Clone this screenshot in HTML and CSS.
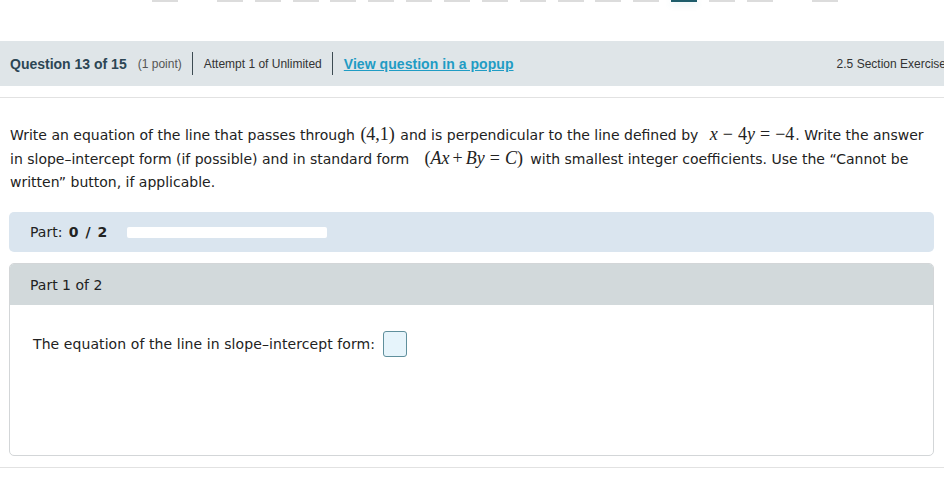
FILE: index.html
```html
<!DOCTYPE html>
<html lang="en">
<head>
  <meta charset="UTF-8" />
  <title>Question 13 of 15</title>
  <link rel="stylesheet" href="styles.css">
</head>
<body>

  <nav class="qnav">
    <span class="qnav-btn qnav-arrow"></span>
    <span class="qnav-btn"></span>
    <span class="qnav-btn"></span>
    <span class="qnav-btn"></span>
    <span class="qnav-btn"></span>
    <span class="qnav-btn"></span>
    <span class="qnav-btn"></span>
    <span class="qnav-btn"></span>
    <span class="qnav-btn"></span>
    <span class="qnav-btn"></span>
    <span class="qnav-btn"></span>
    <span class="qnav-btn"></span>
    <span class="qnav-btn"></span>
    <span class="qnav-btn active"></span>
    <span class="qnav-btn"></span>
    <span class="qnav-btn"></span>
    <span class="qnav-btn qnav-arrow"></span>
  </nav>

  <header class="qheader">
    <div class="qheader-left">
      <strong class="qnum">Question 13 of 15</strong>
      <span class="points">(1 point)</span>
      <span class="divider"></span>
      <span class="attempt">Attempt 1 of Unlimited</span>
      <span class="divider"></span>
      <a class="popup-link" href="#">View question in a popup</a>
    </div>
    <div class="section-name">2.5 Section Exercise</div>
  </header>
  <div class="header-rule"></div>

  <main class="question">
    <p class="prompt">
      Write an equation of the line that passes through <span class="math big">(4,1)</span> and is perpendicular to the line defined by
      <span class="math eq"><i>x</i><span class="op">&minus;</span>4<i>y</i><span class="op">=</span>&minus;4</span>. Write the answer
      in slope&ndash;intercept form (if possible) and in standard form
      <span class="math std">(<i>Ax</i><span class="op sm">+</span><i>By</i><span class="op">=</span><i>C</i>)</span> with smallest integer coefficients. Use the &ldquo;Cannot be
      written&rdquo; button, if applicable.
    </p>

    <div class="progress-panel">
      <span>Part: <b>0 / 2</b></span>
      <div class="progress-track"></div>
    </div>

    <section class="part">
      <div class="part-head">Part 1 of 2</div>
      <div class="part-body">
        <span class="part-label">The equation of the line in slope&ndash;intercept form:</span>
        <span class="answer-box"></span>
      </div>
    </section>
  </main>

  <div class="bottom-rule"></div>

</body>
</html>
```

FILE: styles.css
```css
body {
  margin: 0;
  padding: 0;
  background: #fff;
  color: #222;
  font-family: "DejaVu Sans", Verdana, sans-serif;
}

/* question navigator strip */
.qnav {
  display: flex;
  height: 3px;
  padding-left: 152px;
  gap: 11.86px;
}

.qnav-btn {
  width: 26px;
  height: 2px;
  background: #dcdcdc;
}

.qnav-btn:first-child {
  margin-right: 27px;
}

.qnav-btn:nth-last-child(2) {
  margin-right: 27px;
}

.qnav-btn.active {
  background: #1f5d6b;
  box-shadow: 0 2px 6px rgba(80, 170, 190, 0.25);
}

/* header bar */
.qheader {
  margin-top: 38px;
  height: 45px;
  background: #dfe5e8;
  display: flex;
  align-items: center;
  justify-content: space-between;
  padding-left: 10px;
  font-family: "Liberation Sans", Arial, sans-serif;
}

.header-rule {
  margin-top: 11px;
  height: 1px;
  background: #e2e2e2;
}

.qheader-left {
  display: flex;
  align-items: center;
}

.qnum {
  font-size: 14px;
  color: #2c4654;
}

.points {
  font-size: 12px;
  color: #555;
  margin-left: 11px;
}

.divider {
  width: 1px;
  height: 23px;
  background: #3d4b52;
  margin: 0 11px 0 10px;
}

.attempt {
  font-size: 12px;
  color: #333;
}

.popup-link {
  font-size: 14px;
  font-weight: bold;
  color: #1f9cc4;
  text-decoration: underline;
  letter-spacing: 0.05px;
}

.section-name {
  font-size: 12px;
  color: #333;
  white-space: nowrap;
  margin-right: -2px;
}

/* question body */
.prompt {
  margin: 26px 10px 0 10px;
  font-size: 14px;
  line-height: 22px;
  color: #222;
}

.math {
  font-family: "Liberation Serif", "Times New Roman", serif;
  font-size: 18px;
  line-height: 1;
  margin: 0 1px;
}

.math i {
  font-style: italic;
}

.math .op {
  margin: 0 5px;
}

.math .op.sm {
  margin: 0 3px;
}

.math.eq {
  margin-left: 7px;
}

.math.std {
  display: inline-block;
  line-height: 25px;
  margin-left: 11px;
  margin-right: 3px;
}

.progress-panel {
  margin: 19px 10px 0 9px;
  height: 40px;
  background: #dae5ef;
  border-radius: 5px;
  display: flex;
  align-items: center;
  padding-left: 21px;
  font-size: 14px;
  color: #222;
}

.progress-panel b {
  margin-left: 2px;
  word-spacing: 2px;
}

.progress-track {
  width: 200px;
  height: 11px;
  background: #fff;
  border-radius: 2px;
  margin-left: 20px;
}

.part {
  margin: 11px 10px 0 9px;
  border: 1px solid #d3d6d8;
  border-radius: 5px;
  overflow: hidden;
}

.part-head {
  background: #d2d9db;
  height: 41px;
  display: flex;
  align-items: center;
  padding-left: 20px;
  font-size: 14px;
  color: #222;
}

.part-body {
  height: 150px;
  padding: 26px 0 0 23px;
  box-sizing: border-box;
  display: flex;
  align-items: flex-start;
  font-size: 14px;
  color: #222;
}

.part-label {
  line-height: 26px;
  letter-spacing: 0.08px;
}

.answer-box {
  width: 22px;
  height: 24px;
  margin-left: 8px;
  background: #e6f4fb;
  border: 1px solid #5f8f9c;
  border-radius: 3px;
}

.bottom-rule {
  margin-top: 11px;
  height: 1px;
  background: #e2e2e2;
}
```
